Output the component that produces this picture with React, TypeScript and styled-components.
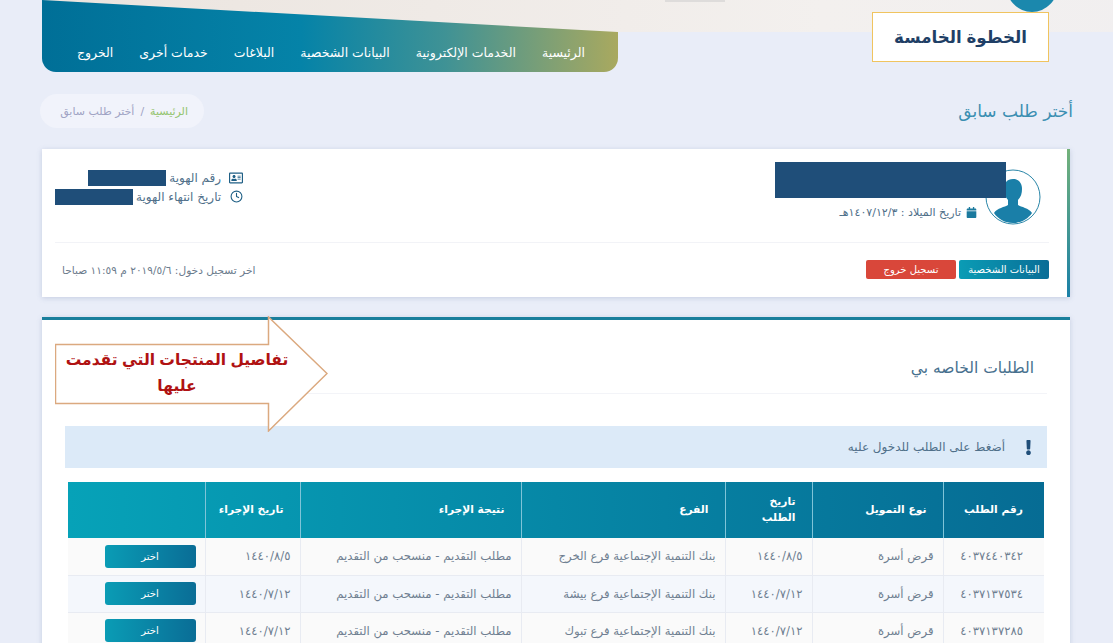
import React from 'react';
import styled, { createGlobalStyle } from 'styled-components';
import { FaRegAddressCard, FaCalendar, FaExclamation } from 'react-icons/fa';
import { Clock } from 'lucide-react';

interface Order {
  id: string;
  kind: string;
  date: string;
  branch: string;
  result: string;
  actionDate: string;
}

const orders: Order[] = [
  { id: '٤٠٣٧٤٤٠٣٤٢', kind: 'قرض أسرة', date: '١٤٤٠/٨/٥', branch: 'بنك التنمية الإجتماعية فرع الخرج', result: 'مطلب التقديم - منسحب من التقديم', actionDate: '١٤٤٠/٨/٥' },
  { id: '٤٠٣٧١٣٧٥٣٤', kind: 'قرض أسرة', date: '١٤٤٠/٧/١٢', branch: 'بنك التنمية الإجتماعية فرع بيشة', result: 'مطلب التقديم - منسحب من التقديم', actionDate: '١٤٤٠/٧/١٢' },
  { id: '٤٠٣٧١٣٧٢٨٥', kind: 'قرض أسرة', date: '١٤٤٠/٧/١٢', branch: 'بنك التنمية الإجتماعية فرع تبوك', result: 'مطلب التقديم - منسحب من التقديم', actionDate: '١٤٤٠/٧/١٢' },
];

const navItems = ['الرئيسية', 'الخدمات الإلكترونية', 'البيانات الشخصية', 'البلاغات', 'خدمات أخرى', 'الخروج'];

const GlobalStyle = createGlobalStyle`
  html, body {
    margin: 0;
    height: 643px;
    overflow: hidden;
    background: #e9edf8;
    font-family: "DejaVu Sans", "Liberation Sans", sans-serif;
  }
  * { box-sizing: border-box; }
`;

const Page = styled.div`
  position: relative;
  width: 1113px;
  height: 643px;
  overflow: hidden;
  background: #e9edf8;
`;

const Header = styled.header`
  position: relative;
  height: 72px;
  padding-right: 495px;
  margin-bottom: 22px;
  background: linear-gradient(90deg, #ebe4de, #f3f0ee 70%, #f1eff0) no-repeat left 42px top / 100% 32px;
`;

const Nav = styled.nav`
  display: flex;
  align-items: center;
  gap: 26px;
  width: 576px;
  height: 72px;
  padding: 32px 33px 0 0;
  border-radius: 0 0 14px 14px;
  background: linear-gradient(270deg, #a9a95f 0%, #3f9295 30%, #0583a8 55%, #006f97 100%);
  clip-path: polygon(0 0, 100% 32px, 100% 100%, 0 100%);
`;

const NavLink = styled.a`
  color: #fff;
  font-size: 12.5px;
  white-space: nowrap;
`;

const LogoEdge = styled.div`
  position: absolute;
  left: 1006px;
  top: -42px;
  width: 52px;
  height: 54px;
  border-radius: 50%;
  background: #1b88ad;
`;

const LogoText = styled.div`
  position: absolute;
  left: 665px;
  top: 0;
  width: 60px;
  height: 2px;
  background: #dedcdb;
`;

const StepBox = styled.div`
  position: absolute;
  left: 872px;
  top: 12px;
  display: flex;
  align-items: center;
  justify-content: center;
  width: 177px;
  height: 50px;
  background: #fff;
  border: 1px solid #f0c45f;
  color: #1f3f66;
  font-family: "Liberation Sans", "DejaVu Sans", sans-serif;
  font-size: 16.7px;
  font-weight: 700;
`;

const TitleRow = styled.div`
  display: flex;
  align-items: center;
  justify-content: space-between;
  height: 34px;
  padding: 0 40px;
  margin-bottom: 21px;
`;

const PageTitle = styled.h1`
  margin: 0;
  color: #3b8fb2;
  font-size: 17px;
  font-weight: 400;
`;

const Breadcrumb = styled.div`
  display: flex;
  align-items: center;
  gap: 6px;
  width: 164px;
  height: 34px;
  padding: 0 16px;
  border-radius: 17px;
  background: #f1f3fb;
  font-size: 11px;
  white-space: nowrap;
`;

const CrumbHome = styled.span`
  color: #94c46e;
`;

const CrumbCurrent = styled.span`
  color: #a0a3c4;
`;

const Card = styled.section`
  position: relative;
  width: 1028px;
  margin: 0 43px 0 42px;
  background: #fff;
  box-shadow: 0 1px 5px rgba(90, 110, 160, 0.25);
`;

const InfoCard = styled(Card)`
  height: 148px;
  margin-bottom: 20px;
  padding: 0 18px 0 13px;
  border-right: 3px solid;
  border-image: linear-gradient(180deg, #74b27a, #1a80a8) 1;
`;

const InfoTop = styled.div`
  display: flex;
  justify-content: space-between;
  height: 94px;
  padding-right: 8px;
  border-bottom: 1px solid #f2f3f7;
`;

const Person = styled.div`
  display: flex;
  gap: 8px;
  padding-top: 20px;
`;

const Avatar = styled.svg`
  width: 56px;
  height: 56px;
  flex: none;
`;

const PersonDetails = styled.div`
  padding-top: 34px;
`;

const Line = styled.div`
  display: flex;
  align-items: center;
  gap: 3px;
  height: 19px;
  color: #50708a;
  font-size: 12px;
  white-space: nowrap;
`;

const BirthLine = styled(Line)`
  gap: 5px;
  font-size: 11px;
`;

const BirthIcon = styled(FaCalendar)`
  color: #1b7a9e;
  font-size: 11px;
`;

const IdBlock = styled.div`
  padding-top: 19px;
`;

const LineIcon = styled.span`
  display: flex;
  justify-content: center;
  width: 14px;
  margin-left: 5px;
  color: #1f5f85;
`;

const Redaction = styled.span`
  display: block;
  width: 78px;
  height: 16px;
  background: #1f4e79;
`;

const NameRedaction = styled.div`
  position: absolute;
  left: 733px;
  top: 13px;
  width: 231px;
  height: 36px;
  background: #1f4e79;
`;

const InfoBottom = styled.div`
  display: flex;
  align-items: center;
  justify-content: space-between;
  height: 53px;
  padding-left: 7px;
`;

const Actions = styled.div`
  display: flex;
  gap: 3px;
`;

const ActionButton = styled.button<{ $danger?: boolean }>`
  width: 90px;
  height: 19px;
  padding: 0;
  border: 0;
  border-radius: 2px;
  color: #fff;
  font-family: inherit;
  font-size: 10px;
  background: ${(p) => (p.$danger ? '#d9473a' : 'linear-gradient(90deg, #0a9cb5, #0a6d96)')};
`;

const LastLogin = styled.div`
  color: #6b7b8c;
  font-size: 10.6px;
  white-space: nowrap;
`;

const OrdersCard = styled(Card)`
  height: 340px;
  padding: 0 23px;
  border-top: 3px solid #1a7f9c;
`;

const OrdersTitle = styled.h2`
  height: 74px;
  margin: 0 0 32px;
  padding: 39px 13px 0 0;
  border-bottom: 1px solid #f3f4f8;
  color: #47708e;
  font-size: 15.5px;
  font-weight: 400;
`;

const Alert = styled.div`
  display: flex;
  align-items: center;
  gap: 16px;
  height: 42px;
  margin-bottom: 14px;
  padding-right: 11px;
  background: #dceaf8;
  color: #50708a;
  font-size: 12px;
`;

const AlertIcon = styled(FaExclamation)`
  color: #1f4e79;
  font-size: 15px;
`;

const Table = styled.table`
  width: 976px;
  margin-right: 3px;
  border-collapse: collapse;
  table-layout: fixed;
`;

const HeadRow = styled.tr`
  height: 56px;
  background: linear-gradient(270deg, #066c94, #06a2b8);
`;

const Th = styled.th<{ $w: number }>`
  width: ${(p) => p.$w}px;
  padding: 0 16px 0 8px;
  border-left: 1px solid #7fc4d8;
  color: #fff;
  font-size: 10.7px;
  font-weight: 700;
  line-height: 16px;
  text-align: right;

  &:first-child {
    padding-right: 21px;
  }

  &:last-child {
    border-left: 0;
  }
`;

const Row = styled.tr<{ $alt?: boolean }>`
  height: 37px;
  background: ${(p) => (p.$alt ? '#f4f7fc' : '#fafafa')};
  border-bottom: 1px solid #e8ebf2;
`;

const Td = styled.td<{ $pad?: number }>`
  padding: 0 ${(p) => p.$pad ?? 9}px 0 0;
  border-left: 1px solid #e8ebf2;
  color: #6f7f91;
  font-size: 11.7px;
  white-space: nowrap;

  &:last-child {
    border-left: 0;
  }
`;

const ChooseButton = styled.button`
  display: block;
  width: 91px;
  height: 23px;
  margin-right: 9px;
  border: 0;
  border-radius: 3px;
  color: #fff;
  font-family: inherit;
  font-size: 10px;
  background: linear-gradient(90deg, #0a9cb5, #0a6d96);
`;

const ArrowCallout = styled.div`
  position: absolute;
  left: 55px;
  top: 316px;
  width: 273px;
  height: 116px;
`;

const ArrowShape = styled.svg`
  display: block;
  width: 273px;
  height: 116px;
`;

const ArrowText = styled.div`
  position: absolute;
  left: 7px;
  top: 31px;
  width: 230px;
  color: #b01212;
  font-family: "Liberation Sans", "DejaVu Sans", sans-serif;
  font-size: 15.5px;
  font-weight: 700;
  line-height: 26px;
  text-align: center;
`;

export default function App() {
  return (
    <Page dir="rtl">
      <GlobalStyle />
      <Header>
        <Nav>
          {navItems.map((item) => (
            <NavLink key={item}>{item}</NavLink>
          ))}
        </Nav>
        <LogoText />
        <LogoEdge />
        <StepBox>الخطوة الخامسة</StepBox>
      </Header>

      <TitleRow>
        <PageTitle>أختر طلب سابق</PageTitle>
        <Breadcrumb>
          <CrumbHome>الرئيسية</CrumbHome>
          <CrumbCurrent>/</CrumbCurrent>
          <CrumbCurrent>أختر طلب سابق</CrumbCurrent>
        </Breadcrumb>
      </TitleRow>

      <InfoCard>
        <InfoTop>
          <Person>
            <Avatar viewBox="0 0 56 56">
              <circle cx="28" cy="28" r="27" fill="#fff" stroke="#2a86a8" strokeWidth="1" />
              <path
                d="M28 10c-6 0-9 4-9 10 0 4 1 8 4 11v5c-3 2-11 3-14 8 4 6 11 10 19 10s15-4 19-10c-3-5-11-6-14-8v-5c3-3 4-7 4-11 0-6-3-10-9-10z"
                fill="#1a7fa8"
              />
            </Avatar>
            <PersonDetails>
              <BirthLine>
                <BirthIcon />
                <span>تاريخ الميلاد : ١٤٠٧/١٢/٣هـ</span>
              </BirthLine>
            </PersonDetails>
          </Person>
          <IdBlock>
            <Line>
              <LineIcon><FaRegAddressCard size={14} /></LineIcon>
              <span>رقم الهوية</span>
              <Redaction />
            </Line>
            <Line>
              <LineIcon><Clock size={13} /></LineIcon>
              <span>تاريخ انتهاء الهوية</span>
              <Redaction />
            </Line>
          </IdBlock>
        </InfoTop>
        <InfoBottom>
          <Actions>
            <ActionButton>البيانات الشخصية</ActionButton>
            <ActionButton $danger>تسجيل خروج</ActionButton>
          </Actions>
          <LastLogin>اخر تسجيل دخول: ٢٠١٩/٥/٦ م ١١:٥٩ صباحا</LastLogin>
        </InfoBottom>
        <NameRedaction />
      </InfoCard>

      <OrdersCard>
        <OrdersTitle>الطلبات الخاصه بي</OrdersTitle>
        <Alert>
          <AlertIcon />
          <span>أضغط على الطلب للدخول عليه</span>
        </Alert>
        <Table>
          <thead>
            <HeadRow>
              <Th $w={101}>رقم الطلب</Th>
              <Th $w={131}>نوع التمويل</Th>
              <Th $w={87}>تاريخ الطلب</Th>
              <Th $w={204}>الفرع</Th>
              <Th $w={221}>نتيجة الإجراء</Th>
              <Th $w={95}>تاريخ الإجراء</Th>
              <Th $w={137} />
            </HeadRow>
          </thead>
          <tbody>
            {orders.map((order, i) => (
              <Row key={order.id} $alt={i === 1}>
                <Td $pad={21}>{order.id}</Td>
                <Td>{order.kind}</Td>
                <Td>{order.date}</Td>
                <Td>{order.branch}</Td>
                <Td>{order.result}</Td>
                <Td>{order.actionDate}</Td>
                <Td $pad={0}><ChooseButton>اختر</ChooseButton></Td>
              </Row>
            ))}
          </tbody>
        </Table>
      </OrdersCard>

      <ArrowCallout>
        <ArrowShape viewBox="0 0 273 116">
          <polygon
            points="0.5,28.5 213.5,28.5 213.5,1 272,57.5 213.5,115 213.5,87.5 0.5,87.5"
            fill="#fff"
            stroke="#dba97f"
            strokeWidth="1.5"
          />
        </ArrowShape>
        <ArrowText>تفاصيل المنتجات التي تقدمت عليها</ArrowText>
      </ArrowCallout>
    </Page>
  );
}
